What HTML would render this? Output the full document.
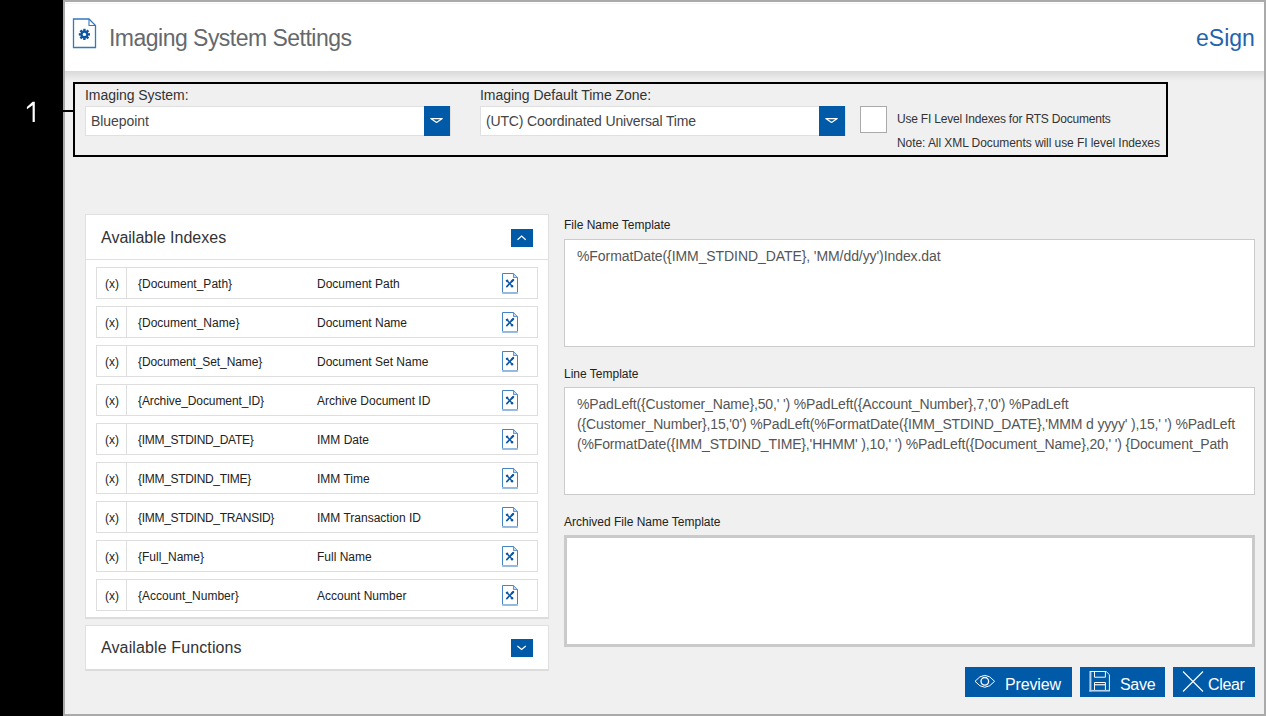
<!DOCTYPE html>
<html><head><meta charset="utf-8">
<style>
*{box-sizing:border-box;margin:0;padding:0}
html,body{width:1266px;height:716px;overflow:hidden;background:#000;font-family:"Liberation Sans",sans-serif}
.a{position:absolute}
.t{position:absolute;white-space:pre}
</style></head><body>

<div class="a" style="left:63px;top:0;width:1203px;height:716px;background:#aaa"></div>
<div class="a" style="left:65px;top:2px;width:1199px;height:712px;background:#f0f0f0"></div>
<div class="a" style="left:65px;top:2px;width:1199px;height:69px;background:#fff"></div>
<div class="a" style="left:65px;top:3px;width:1199px;height:1px;background:#f5f5f5"></div>
<div class="a" style="left:65px;top:71px;width:1199px;height:10px;background:linear-gradient(#d9d9d9,#f0f0f0)"></div>
<svg class="a" style="left:72px;top:17px" width="26" height="33" viewBox="0 0 26 33">
<path d="M1.5 2 H17 L23.5 8.5 V30.5 H1.5 Z" fill="none" stroke="#3677bd" stroke-width="1.3"/>
<path d="M17 2 V8.5 H23.5" fill="none" stroke="#3677bd" stroke-width="1.1"/>
<g transform="translate(12.4,17.4)" fill="#0b57a4">
<circle r="3.9"/>
<rect x="-1.2" y="-5.6" width="2.4" height="11.2"/>
<rect x="-5.6" y="-1.2" width="11.2" height="2.4"/>
<rect x="-1.2" y="-5.6" width="2.4" height="11.2" transform="rotate(45)"/>
<rect x="-1.2" y="-5.6" width="2.4" height="11.2" transform="rotate(-45)"/>
<circle r="1.7" fill="#fff"/>
</g></svg>
<div class="t" style="left:109px;top:26.83px;font-size:23px;line-height:23px;color:#65696d;letter-spacing:-0.52px;">Imaging System Settings</div>
<div class="t" style="left:1196px;top:27.33px;font-size:23px;line-height:23px;color:#1f65ad;letter-spacing:0px;">eSign</div>
<svg class="a" style="left:0;top:0" width="60" height="130"><path d="M32.6 101.8 H34.8 V122 H32.6 V105.2 L26.9 109.2 V107.1 Z" fill="#fff"/></svg>
<div class="a" style="left:63px;top:110px;width:11px;height:2px;background:#000"></div>
<div class="a" style="left:73px;top:82px;width:1095px;height:75px;border:2px solid #000"></div>
<div class="t" style="left:85px;top:88.15px;font-size:14px;line-height:14px;color:#333;letter-spacing:-0.05px;">Imaging System:</div>
<div class="a" style="left:85px;top:106px;width:366px;height:30px;background:#fff;border:1px solid #e0e0e0"></div>
<div class="t" style="left:91px;top:114.15px;font-size:14px;line-height:14px;color:#444;letter-spacing:-0.05px;">Bluepoint</div>
<div class="a" style="left:424px;top:106px;width:26px;height:30px;background:#005aa7"></div>
<svg class="a" style="left:424px;top:106px" width="26" height="30"><path d="M6.8 12.6 H18.3 L12.55 16.5 Z" fill="none" stroke="#fff" stroke-width="1.2" stroke-linejoin="round"/></svg>
<div class="t" style="left:480px;top:88.15px;font-size:14px;line-height:14px;color:#333;letter-spacing:-0.03px;">Imaging Default Time Zone:</div>
<div class="a" style="left:480px;top:106px;width:366px;height:30px;background:#fff;border:1px solid #e0e0e0"></div>
<div class="t" style="left:486px;top:114.15px;font-size:14px;line-height:14px;color:#444;letter-spacing:-0.15px;">(UTC) Coordinated Universal Time</div>
<div class="a" style="left:819px;top:106px;width:26px;height:30px;background:#005aa7"></div>
<svg class="a" style="left:819px;top:106px" width="26" height="30"><path d="M6.8 12.6 H18.3 L12.55 16.5 Z" fill="none" stroke="#fff" stroke-width="1.2" stroke-linejoin="round"/></svg>
<div class="a" style="left:860px;top:106px;width:27px;height:27px;background:#fff;border:1px solid #aaa"></div>
<div class="t" style="left:897px;top:112.74px;font-size:12px;line-height:12px;color:#333;letter-spacing:-0.2px;">Use FI Level Indexes for RTS Documents</div>
<div class="t" style="left:897px;top:136.64px;font-size:12px;line-height:12px;color:#333;letter-spacing:-0.07px;">Note: All XML Documents will use FI level Indexes</div>
<div class="a" style="left:85px;top:214px;width:464px;height:405px;background:#fff;border:1px solid #e0e0e0;border-bottom:2px solid #dcdcdc"></div>
<div class="a" style="left:86px;top:259px;width:462px;height:1px;background:#e0e0e0"></div>
<div class="t" style="left:101px;top:230.45px;font-size:16px;line-height:16px;color:#333;letter-spacing:0px;">Available Indexes</div>
<div class="a" style="left:511px;top:229px;width:22px;height:18px;background:#005aa7"></div>
<svg class="a" style="left:511px;top:229px" width="22" height="18"><path d="M6.5 10.8 L10.6 7.1 L14.7 10.8" fill="none" stroke="#fff" stroke-width="1.2"/></svg>
<div class="a" style="left:96px;top:267px;width:442px;height:32px;background:#fff;border:1px solid #dedede"></div>
<div class="a" style="left:126px;top:267px;width:1px;height:32px;background:#dedede"></div>
<div class="t" style="left:105px;top:277.64px;font-size:12px;line-height:12px;color:#222;letter-spacing:0px;">(x)</div>
<div class="t" style="left:138px;top:277.64px;font-size:12px;line-height:12px;color:#222;letter-spacing:0px;">{Document_Path}</div>
<div class="t" style="left:317px;top:277.64px;font-size:12px;line-height:12px;color:#222;letter-spacing:0px;">Document Path</div>
<svg class="a" style="left:498px;top:270px" width="24" height="26" viewBox="0 0 24 26">
<path d="M4.5 3.5 H15.5 L19.5 7.5 V23 H4.5 Z" fill="none" stroke="#4683c4" stroke-width="1"/>
<path d="M15.5 3.5 V7.5 H19.5" fill="none" stroke="#4683c4" stroke-width="1"/>
<path d="M15.7 4 L19 7.2 H15.9 Z" fill="#c5daef"/>
<rect x="4" y="22" width="16" height="1.6" fill="#93b8de"/>
<path d="M9 10.8 L14.2 16.2" stroke="#0b57a4" stroke-width="1.4"/>
<path d="M15.1 10 L8.8 16.6" stroke="#0b57a4" stroke-width="1.6" stroke-linecap="round"/>
<path d="M15.2 9.9 L13.6 11.5" stroke="#0b57a4" stroke-width="2.1" stroke-linecap="round"/>
<circle cx="9.1" cy="10.8" r="1.3" fill="#0b57a4"/>
<circle cx="14.1" cy="16.3" r="1.3" fill="#0b57a4"/>
<path d="M8.2 9.9 L8.9 9.2 M15 17.2 L15.7 16.5" stroke="#fff" stroke-width="0.9"/>
</svg>
<div class="a" style="left:96px;top:306px;width:442px;height:32px;background:#fff;border:1px solid #dedede"></div>
<div class="a" style="left:126px;top:306px;width:1px;height:32px;background:#dedede"></div>
<div class="t" style="left:105px;top:316.64px;font-size:12px;line-height:12px;color:#222;letter-spacing:0px;">(x)</div>
<div class="t" style="left:138px;top:316.64px;font-size:12px;line-height:12px;color:#222;letter-spacing:0px;">{Document_Name}</div>
<div class="t" style="left:317px;top:316.64px;font-size:12px;line-height:12px;color:#222;letter-spacing:0px;">Document Name</div>
<svg class="a" style="left:498px;top:309px" width="24" height="26" viewBox="0 0 24 26">
<path d="M4.5 3.5 H15.5 L19.5 7.5 V23 H4.5 Z" fill="none" stroke="#4683c4" stroke-width="1"/>
<path d="M15.5 3.5 V7.5 H19.5" fill="none" stroke="#4683c4" stroke-width="1"/>
<path d="M15.7 4 L19 7.2 H15.9 Z" fill="#c5daef"/>
<rect x="4" y="22" width="16" height="1.6" fill="#93b8de"/>
<path d="M9 10.8 L14.2 16.2" stroke="#0b57a4" stroke-width="1.4"/>
<path d="M15.1 10 L8.8 16.6" stroke="#0b57a4" stroke-width="1.6" stroke-linecap="round"/>
<path d="M15.2 9.9 L13.6 11.5" stroke="#0b57a4" stroke-width="2.1" stroke-linecap="round"/>
<circle cx="9.1" cy="10.8" r="1.3" fill="#0b57a4"/>
<circle cx="14.1" cy="16.3" r="1.3" fill="#0b57a4"/>
<path d="M8.2 9.9 L8.9 9.2 M15 17.2 L15.7 16.5" stroke="#fff" stroke-width="0.9"/>
</svg>
<div class="a" style="left:96px;top:345px;width:442px;height:32px;background:#fff;border:1px solid #dedede"></div>
<div class="a" style="left:126px;top:345px;width:1px;height:32px;background:#dedede"></div>
<div class="t" style="left:105px;top:355.64px;font-size:12px;line-height:12px;color:#222;letter-spacing:0px;">(x)</div>
<div class="t" style="left:138px;top:355.64px;font-size:12px;line-height:12px;color:#222;letter-spacing:-0.1px;">{Document_Set_Name}</div>
<div class="t" style="left:317px;top:355.64px;font-size:12px;line-height:12px;color:#222;letter-spacing:0px;">Document Set Name</div>
<svg class="a" style="left:498px;top:348px" width="24" height="26" viewBox="0 0 24 26">
<path d="M4.5 3.5 H15.5 L19.5 7.5 V23 H4.5 Z" fill="none" stroke="#4683c4" stroke-width="1"/>
<path d="M15.5 3.5 V7.5 H19.5" fill="none" stroke="#4683c4" stroke-width="1"/>
<path d="M15.7 4 L19 7.2 H15.9 Z" fill="#c5daef"/>
<rect x="4" y="22" width="16" height="1.6" fill="#93b8de"/>
<path d="M9 10.8 L14.2 16.2" stroke="#0b57a4" stroke-width="1.4"/>
<path d="M15.1 10 L8.8 16.6" stroke="#0b57a4" stroke-width="1.6" stroke-linecap="round"/>
<path d="M15.2 9.9 L13.6 11.5" stroke="#0b57a4" stroke-width="2.1" stroke-linecap="round"/>
<circle cx="9.1" cy="10.8" r="1.3" fill="#0b57a4"/>
<circle cx="14.1" cy="16.3" r="1.3" fill="#0b57a4"/>
<path d="M8.2 9.9 L8.9 9.2 M15 17.2 L15.7 16.5" stroke="#fff" stroke-width="0.9"/>
</svg>
<div class="a" style="left:96px;top:384px;width:442px;height:32px;background:#fff;border:1px solid #dedede"></div>
<div class="a" style="left:126px;top:384px;width:1px;height:32px;background:#dedede"></div>
<div class="t" style="left:105px;top:394.64px;font-size:12px;line-height:12px;color:#222;letter-spacing:0px;">(x)</div>
<div class="t" style="left:138px;top:394.64px;font-size:12px;line-height:12px;color:#222;letter-spacing:-0.1px;">{Archive_Document_ID}</div>
<div class="t" style="left:317px;top:394.64px;font-size:12px;line-height:12px;color:#222;letter-spacing:0px;">Archive Document ID</div>
<svg class="a" style="left:498px;top:387px" width="24" height="26" viewBox="0 0 24 26">
<path d="M4.5 3.5 H15.5 L19.5 7.5 V23 H4.5 Z" fill="none" stroke="#4683c4" stroke-width="1"/>
<path d="M15.5 3.5 V7.5 H19.5" fill="none" stroke="#4683c4" stroke-width="1"/>
<path d="M15.7 4 L19 7.2 H15.9 Z" fill="#c5daef"/>
<rect x="4" y="22" width="16" height="1.6" fill="#93b8de"/>
<path d="M9 10.8 L14.2 16.2" stroke="#0b57a4" stroke-width="1.4"/>
<path d="M15.1 10 L8.8 16.6" stroke="#0b57a4" stroke-width="1.6" stroke-linecap="round"/>
<path d="M15.2 9.9 L13.6 11.5" stroke="#0b57a4" stroke-width="2.1" stroke-linecap="round"/>
<circle cx="9.1" cy="10.8" r="1.3" fill="#0b57a4"/>
<circle cx="14.1" cy="16.3" r="1.3" fill="#0b57a4"/>
<path d="M8.2 9.9 L8.9 9.2 M15 17.2 L15.7 16.5" stroke="#fff" stroke-width="0.9"/>
</svg>
<div class="a" style="left:96px;top:423px;width:442px;height:32px;background:#fff;border:1px solid #dedede"></div>
<div class="a" style="left:126px;top:423px;width:1px;height:32px;background:#dedede"></div>
<div class="t" style="left:105px;top:433.64px;font-size:12px;line-height:12px;color:#222;letter-spacing:0px;">(x)</div>
<div class="t" style="left:138px;top:433.64px;font-size:12px;line-height:12px;color:#222;letter-spacing:-0.3px;">{IMM_STDIND_DATE}</div>
<div class="t" style="left:317px;top:433.64px;font-size:12px;line-height:12px;color:#222;letter-spacing:0px;">IMM Date</div>
<svg class="a" style="left:498px;top:426px" width="24" height="26" viewBox="0 0 24 26">
<path d="M4.5 3.5 H15.5 L19.5 7.5 V23 H4.5 Z" fill="none" stroke="#4683c4" stroke-width="1"/>
<path d="M15.5 3.5 V7.5 H19.5" fill="none" stroke="#4683c4" stroke-width="1"/>
<path d="M15.7 4 L19 7.2 H15.9 Z" fill="#c5daef"/>
<rect x="4" y="22" width="16" height="1.6" fill="#93b8de"/>
<path d="M9 10.8 L14.2 16.2" stroke="#0b57a4" stroke-width="1.4"/>
<path d="M15.1 10 L8.8 16.6" stroke="#0b57a4" stroke-width="1.6" stroke-linecap="round"/>
<path d="M15.2 9.9 L13.6 11.5" stroke="#0b57a4" stroke-width="2.1" stroke-linecap="round"/>
<circle cx="9.1" cy="10.8" r="1.3" fill="#0b57a4"/>
<circle cx="14.1" cy="16.3" r="1.3" fill="#0b57a4"/>
<path d="M8.2 9.9 L8.9 9.2 M15 17.2 L15.7 16.5" stroke="#fff" stroke-width="0.9"/>
</svg>
<div class="a" style="left:96px;top:462px;width:442px;height:32px;background:#fff;border:1px solid #dedede"></div>
<div class="a" style="left:126px;top:462px;width:1px;height:32px;background:#dedede"></div>
<div class="t" style="left:105px;top:472.64px;font-size:12px;line-height:12px;color:#222;letter-spacing:0px;">(x)</div>
<div class="t" style="left:138px;top:472.64px;font-size:12px;line-height:12px;color:#222;letter-spacing:-0.3px;">{IMM_STDIND_TIME}</div>
<div class="t" style="left:317px;top:472.64px;font-size:12px;line-height:12px;color:#222;letter-spacing:0px;">IMM Time</div>
<svg class="a" style="left:498px;top:465px" width="24" height="26" viewBox="0 0 24 26">
<path d="M4.5 3.5 H15.5 L19.5 7.5 V23 H4.5 Z" fill="none" stroke="#4683c4" stroke-width="1"/>
<path d="M15.5 3.5 V7.5 H19.5" fill="none" stroke="#4683c4" stroke-width="1"/>
<path d="M15.7 4 L19 7.2 H15.9 Z" fill="#c5daef"/>
<rect x="4" y="22" width="16" height="1.6" fill="#93b8de"/>
<path d="M9 10.8 L14.2 16.2" stroke="#0b57a4" stroke-width="1.4"/>
<path d="M15.1 10 L8.8 16.6" stroke="#0b57a4" stroke-width="1.6" stroke-linecap="round"/>
<path d="M15.2 9.9 L13.6 11.5" stroke="#0b57a4" stroke-width="2.1" stroke-linecap="round"/>
<circle cx="9.1" cy="10.8" r="1.3" fill="#0b57a4"/>
<circle cx="14.1" cy="16.3" r="1.3" fill="#0b57a4"/>
<path d="M8.2 9.9 L8.9 9.2 M15 17.2 L15.7 16.5" stroke="#fff" stroke-width="0.9"/>
</svg>
<div class="a" style="left:96px;top:501px;width:442px;height:32px;background:#fff;border:1px solid #dedede"></div>
<div class="a" style="left:126px;top:501px;width:1px;height:32px;background:#dedede"></div>
<div class="t" style="left:105px;top:511.64px;font-size:12px;line-height:12px;color:#222;letter-spacing:0px;">(x)</div>
<div class="t" style="left:138px;top:511.64px;font-size:12px;line-height:12px;color:#222;letter-spacing:-0.3px;">{IMM_STDIND_TRANSID}</div>
<div class="t" style="left:317px;top:511.64px;font-size:12px;line-height:12px;color:#222;letter-spacing:0px;">IMM Transaction ID</div>
<svg class="a" style="left:498px;top:504px" width="24" height="26" viewBox="0 0 24 26">
<path d="M4.5 3.5 H15.5 L19.5 7.5 V23 H4.5 Z" fill="none" stroke="#4683c4" stroke-width="1"/>
<path d="M15.5 3.5 V7.5 H19.5" fill="none" stroke="#4683c4" stroke-width="1"/>
<path d="M15.7 4 L19 7.2 H15.9 Z" fill="#c5daef"/>
<rect x="4" y="22" width="16" height="1.6" fill="#93b8de"/>
<path d="M9 10.8 L14.2 16.2" stroke="#0b57a4" stroke-width="1.4"/>
<path d="M15.1 10 L8.8 16.6" stroke="#0b57a4" stroke-width="1.6" stroke-linecap="round"/>
<path d="M15.2 9.9 L13.6 11.5" stroke="#0b57a4" stroke-width="2.1" stroke-linecap="round"/>
<circle cx="9.1" cy="10.8" r="1.3" fill="#0b57a4"/>
<circle cx="14.1" cy="16.3" r="1.3" fill="#0b57a4"/>
<path d="M8.2 9.9 L8.9 9.2 M15 17.2 L15.7 16.5" stroke="#fff" stroke-width="0.9"/>
</svg>
<div class="a" style="left:96px;top:540px;width:442px;height:32px;background:#fff;border:1px solid #dedede"></div>
<div class="a" style="left:126px;top:540px;width:1px;height:32px;background:#dedede"></div>
<div class="t" style="left:105px;top:550.64px;font-size:12px;line-height:12px;color:#222;letter-spacing:0px;">(x)</div>
<div class="t" style="left:138px;top:550.64px;font-size:12px;line-height:12px;color:#222;letter-spacing:0px;">{Full_Name}</div>
<div class="t" style="left:317px;top:550.64px;font-size:12px;line-height:12px;color:#222;letter-spacing:0px;">Full Name</div>
<svg class="a" style="left:498px;top:543px" width="24" height="26" viewBox="0 0 24 26">
<path d="M4.5 3.5 H15.5 L19.5 7.5 V23 H4.5 Z" fill="none" stroke="#4683c4" stroke-width="1"/>
<path d="M15.5 3.5 V7.5 H19.5" fill="none" stroke="#4683c4" stroke-width="1"/>
<path d="M15.7 4 L19 7.2 H15.9 Z" fill="#c5daef"/>
<rect x="4" y="22" width="16" height="1.6" fill="#93b8de"/>
<path d="M9 10.8 L14.2 16.2" stroke="#0b57a4" stroke-width="1.4"/>
<path d="M15.1 10 L8.8 16.6" stroke="#0b57a4" stroke-width="1.6" stroke-linecap="round"/>
<path d="M15.2 9.9 L13.6 11.5" stroke="#0b57a4" stroke-width="2.1" stroke-linecap="round"/>
<circle cx="9.1" cy="10.8" r="1.3" fill="#0b57a4"/>
<circle cx="14.1" cy="16.3" r="1.3" fill="#0b57a4"/>
<path d="M8.2 9.9 L8.9 9.2 M15 17.2 L15.7 16.5" stroke="#fff" stroke-width="0.9"/>
</svg>
<div class="a" style="left:96px;top:579px;width:442px;height:32px;background:#fff;border:1px solid #dedede"></div>
<div class="a" style="left:126px;top:579px;width:1px;height:32px;background:#dedede"></div>
<div class="t" style="left:105px;top:589.64px;font-size:12px;line-height:12px;color:#222;letter-spacing:0px;">(x)</div>
<div class="t" style="left:138px;top:589.64px;font-size:12px;line-height:12px;color:#222;letter-spacing:0px;">{Account_Number}</div>
<div class="t" style="left:317px;top:589.64px;font-size:12px;line-height:12px;color:#222;letter-spacing:0px;">Account Number</div>
<svg class="a" style="left:498px;top:582px" width="24" height="26" viewBox="0 0 24 26">
<path d="M4.5 3.5 H15.5 L19.5 7.5 V23 H4.5 Z" fill="none" stroke="#4683c4" stroke-width="1"/>
<path d="M15.5 3.5 V7.5 H19.5" fill="none" stroke="#4683c4" stroke-width="1"/>
<path d="M15.7 4 L19 7.2 H15.9 Z" fill="#c5daef"/>
<rect x="4" y="22" width="16" height="1.6" fill="#93b8de"/>
<path d="M9 10.8 L14.2 16.2" stroke="#0b57a4" stroke-width="1.4"/>
<path d="M15.1 10 L8.8 16.6" stroke="#0b57a4" stroke-width="1.6" stroke-linecap="round"/>
<path d="M15.2 9.9 L13.6 11.5" stroke="#0b57a4" stroke-width="2.1" stroke-linecap="round"/>
<circle cx="9.1" cy="10.8" r="1.3" fill="#0b57a4"/>
<circle cx="14.1" cy="16.3" r="1.3" fill="#0b57a4"/>
<path d="M8.2 9.9 L8.9 9.2 M15 17.2 L15.7 16.5" stroke="#fff" stroke-width="0.9"/>
</svg>
<div class="a" style="left:85px;top:625px;width:464px;height:46px;background:#fff;border:1px solid #e0e0e0;border-bottom:2px solid #dcdcdc"></div>
<div class="t" style="left:101px;top:640.35px;font-size:16px;line-height:16px;color:#333;letter-spacing:0.12px;">Available Functions</div>
<div class="a" style="left:511px;top:639px;width:22px;height:18px;background:#005aa7"></div>
<svg class="a" style="left:511px;top:639px" width="22" height="18"><path d="M6.4 7.0 L10.6 10.4 L14.8 7.0" fill="none" stroke="#fff" stroke-width="1.2"/></svg>
<div class="t" style="left:564px;top:218.84px;font-size:12px;line-height:12px;color:#222;letter-spacing:0px;">File Name Template</div>
<div class="a" style="left:564px;top:239px;width:691px;height:108px;background:#fff;border:1px solid #cbcbcb"></div>
<div class="t" style="left:577px;top:248.75px;font-size:14px;line-height:14px;color:#555;letter-spacing:-0.08px;">%FormatDate({IMM_STDIND_DATE}, 'MM/dd/yy')Index.dat</div>
<div class="t" style="left:564px;top:368.04px;font-size:12px;line-height:12px;color:#222;letter-spacing:0px;">Line Template</div>
<div class="a" style="left:564px;top:387px;width:691px;height:108px;background:#fff;border:1px solid #cbcbcb"></div>
<div class="t" style="left:577px;top:397.15px;font-size:14px;line-height:14px;color:#555;letter-spacing:-0.15px;">%PadLeft({Customer_Name},50,' ') %PadLeft({Account_Number},7,'0') %PadLeft</div>
<div class="t" style="left:577px;top:417.15px;font-size:14px;line-height:14px;color:#555;letter-spacing:-0.15px;">({Customer_Number},15,'0') %PadLeft(%FormatDate({IMM_STDIND_DATE},'MMM d yyyy' ),15,' ') %PadLeft</div>
<div class="t" style="left:577px;top:437.15px;font-size:14px;line-height:14px;color:#555;letter-spacing:-0.15px;">(%FormatDate({IMM_STDIND_TIME},'HHMM' ),10,' ') %PadLeft({Document_Name},20,' ') {Document_Path</div>
<div class="t" style="left:564px;top:515.54px;font-size:12px;line-height:12px;color:#222;letter-spacing:0px;">Archived File Name Template</div>
<div class="a" style="left:564px;top:535px;width:691px;height:112px;background:#fff;border:3px solid #cacaca"></div>
<div class="a" style="left:965px;top:667px;width:107px;height:30px;background:#005aa7"></div>
<svg class="a" style="left:973px;top:673px" width="24" height="16" viewBox="0 0 24 16">
<path d="M2 8.3 Q11.8 -3.6 21.6 8.3 Q11.8 20.2 2 8.3 Z" fill="none" stroke="#fff" stroke-width="1"/>
<circle cx="11.8" cy="8.3" r="3.8" fill="none" stroke="#fff" stroke-width="1.3"/>
</svg>
<div class="t" style="left:1005px;top:677.45px;font-size:16px;line-height:16px;color:#fff;letter-spacing:-0.15px;">Preview</div>
<div class="a" style="left:1080px;top:667px;width:85px;height:30px;background:#005aa7"></div>
<svg class="a" style="left:1088px;top:670px" width="24" height="24" viewBox="0 0 24 24">
<rect x="1.4" y="1" width="2" height="20.6" fill="#b7cfe7"/>
<rect x="1.4" y="19.9" width="20.5" height="1.7" fill="#b7cfe7"/>
<path d="M2 1.5 H18.2 L21.4 4.7 V21" fill="none" stroke="#eef4fa" stroke-width="1"/>
<path d="M6.5 1.5 V7.2 H17.4 V1.5" fill="none" stroke="#fff" stroke-width="1"/>
<path d="M6.5 20 V12.5 H17.4 V20" fill="none" stroke="#fff" stroke-width="1"/>
<rect x="7" y="14" width="10" height="1.4" fill="#d0e0f0"/>
</svg>
<div class="t" style="left:1120px;top:677.45px;font-size:16px;line-height:16px;color:#fff;letter-spacing:-0.3px;">Save</div>
<div class="a" style="left:1173px;top:667px;width:82px;height:30px;background:#005aa7"></div>
<svg class="a" style="left:1181px;top:670px" width="24" height="24" viewBox="0 0 24 24">
<path d="M2 1.5 L22 21.5 M22 1.5 L2 21.5" stroke="#fff" stroke-width="1.1"/>
</svg>
<div class="t" style="left:1208px;top:677.45px;font-size:16px;line-height:16px;color:#fff;letter-spacing:-0.35px;">Clear</div>
</body></html>
